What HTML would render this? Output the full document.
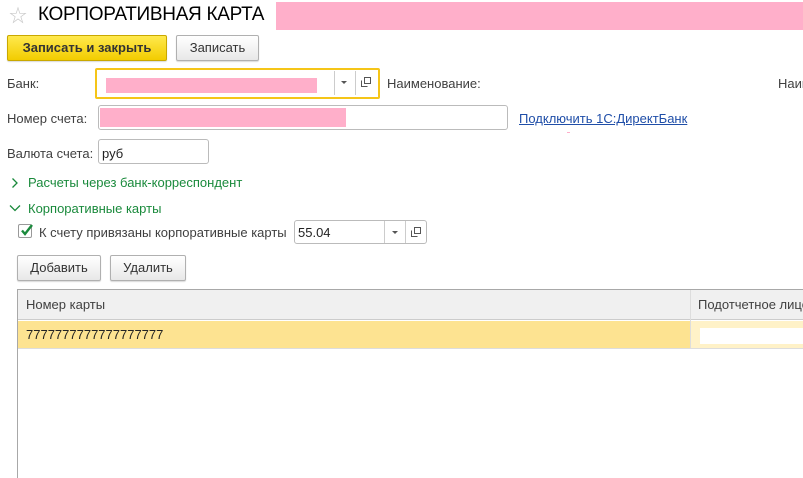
<!DOCTYPE html>
<html style="width:803px;height:478px;overflow:hidden"><head><meta charset="utf-8"><style>
*{box-sizing:border-box;margin:0;padding:0}
body{width:803px;height:478px;background:#fff;position:relative;overflow:hidden;font-family:Arial,"Liberation Sans","Noto Sans CJK SC",sans-serif;font-size:13px;color:#404040}
.a{position:absolute;white-space:nowrap}
.pink{position:absolute;background:#ffafca}
.btn{position:absolute;border:1px solid #b0b0b0;border-radius:2px;background:linear-gradient(#fff,#e8e8e8);text-align:center;color:#333;box-shadow:0 1px 1px rgba(0,0,0,.15)}
.inp{position:absolute;border:1px solid #bbb;border-radius:3px;background:#fff}
.g{color:#1a8a3c}
</style></head><body>
<div class="a" style="left:9px;top:2px;font-size:18px;color:#c8c8c8">☆</div>
<div class="a" style="left:38px;top:4px;font-size:19px;color:#000;letter-spacing:-0.3px">КОРПОРАТИВНАЯ КАРТА</div>
<div class="pink" style="left:276px;top:2px;width:527px;height:28px"></div>

<div class="btn" style="left:7px;top:35px;width:160px;height:26px;background:linear-gradient(#ffe94d,#f2cc00);border-color:#c9a800;font-weight:bold;line-height:24px">Записать и закрыть</div>
<div class="btn" style="left:176px;top:35px;width:83px;height:26px;line-height:24px">Записать</div>

<div class="a" style="left:7px;top:76px">Банк:</div>
<div class="a" style="left:95px;top:68px;width:285px;height:31px;border:2px solid #f5c518;border-radius:2px"></div>
<div class="pink" style="left:106px;top:78px;width:211px;height:15px"></div>
<div class="a" style="left:334px;top:71px;width:1px;height:24px;background:#ccc"></div>
<div class="a" style="left:355px;top:71px;width:1px;height:24px;background:#ccc"></div>
<svg class="a" style="left:341px;top:81px" width="7" height="4"><path d="M0 0h6l-3 3z" fill="#555"/></svg>
<svg class="a" style="left:361px;top:77px" width="11" height="11"><rect x="3.5" y="0.5" width="6" height="6" fill="none" stroke="#555"/><path d="M0.5 3.5v6h6" fill="none" stroke="#555"/></svg>
<div class="a" style="left:387px;top:76px">Наименование:</div>
<div class="a" style="left:778px;top:76px">Наим</div>

<div class="a" style="left:7px;top:111px">Номер счета:</div>
<div class="inp" style="left:98px;top:105px;width:410px;height:25px"></div>
<div class="pink" style="left:100px;top:108px;width:246px;height:19px"></div>
<div class="a" style="left:519px;top:111px;color:#1f4ea8;text-decoration:underline">Подключить 1С:ДиректБанк</div>
<div class="a" style="left:567px;top:132px;width:3px;height:1px;background:#ffafca"></div>

<div class="a" style="left:7px;top:146px">Валюта счета:</div>
<div class="inp" style="left:98px;top:139px;width:111px;height:25px"></div>
<div class="a" style="left:102px;top:146px;color:#222">руб</div>

<svg class="a" style="left:11px;top:177px" width="8" height="12"><path d="M1.5 1.5l4.5 4.5-4.5 4.5" fill="none" stroke="#1a8a3c" stroke-width="1.3"/></svg>
<div class="a g" style="left:28px;top:175px">Расчеты через банк-корреспондент</div>
<svg class="a" style="left:9px;top:204px" width="12" height="8"><path d="M1 1.5l5 5 5-5" fill="none" stroke="#1a8a3c" stroke-width="1.3"/></svg>
<div class="a g" style="left:28px;top:201px">Корпоративные карты</div>

<div class="a" style="left:18px;top:224px;width:14px;height:14px;border:1px solid #999;border-radius:2px;background:#fff"></div>
<svg class="a" style="left:19px;top:222px" width="16" height="16"><path d="M3 8.5l3 3.5L13 3" fill="none" stroke="#1a8a3c" stroke-width="2.4"/></svg>
<div class="a" style="left:39px;top:225px">К счету привязаны корпоративные карты</div>
<div class="inp" style="left:294px;top:220px;width:133px;height:24px"></div>
<div class="a" style="left:384px;top:221px;width:1px;height:22px;background:#ccc"></div>
<div class="a" style="left:405px;top:221px;width:1px;height:22px;background:#ccc"></div>
<div class="a" style="left:298px;top:225px;color:#222">55.04</div>
<svg class="a" style="left:392px;top:231px" width="7" height="4"><path d="M0 0h6l-3 3z" fill="#555"/></svg>
<svg class="a" style="left:411px;top:227px" width="11" height="11"><rect x="3.5" y="0.5" width="6" height="6" fill="none" stroke="#555"/><path d="M0.5 3.5v6h6" fill="none" stroke="#555"/></svg>

<div class="btn" style="left:17px;top:255px;width:84px;height:26px;line-height:24px">Добавить</div>
<div class="btn" style="left:110px;top:255px;width:76px;height:26px;line-height:24px">Удалить</div>

<div class="a" style="left:17px;top:289px;width:800px;height:190px;border:1px solid #a8a8a8;border-bottom:none"></div>
<div class="a" style="left:18px;top:290px;width:790px;height:30px;background:#f0f0f0;border-bottom:1px solid #ccc"></div>
<div class="a" style="left:690px;top:290px;width:1px;height:59px;background:#ddd"></div>
<div class="a" style="left:26px;top:297px">Номер карты</div>
<div class="a" style="left:698px;top:297px">Подотчетное лицо</div>
<div class="a" style="left:18px;top:321px;width:672px;height:27px;background:#fde391"></div>
<div class="a" style="left:691px;top:321px;width:112px;height:27px;background:#fff2c8"></div>
<div class="a" style="left:700px;top:328px;width:103px;height:16px;background:#fff"></div>
<div class="a" style="left:18px;top:348px;width:790px;height:1px;background:#ddd"></div>
<div class="a" style="left:26px;top:327px;color:#222">7777777777777777777</div>
</body></html>
